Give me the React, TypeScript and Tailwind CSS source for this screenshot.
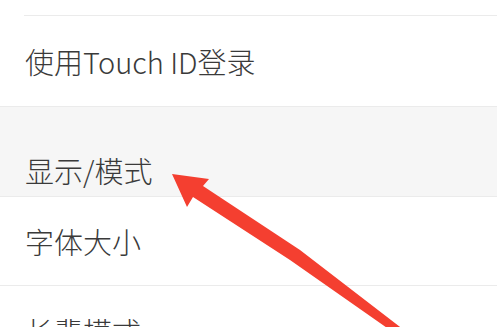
const rowText = "pl-[25px] text-[29px] leading-[30px] font-light";

function Arrow() {
  return (
    <svg
      className="pointer-events-none absolute left-0 top-0"
      width="497"
      height="327"
      viewBox="0 0 497 327"
    >
      <polygon
        fill="#f43f30"
        points="172,174 209,179 203,186 300,250 404,330 390,330 290,260 193,197 187,207"
      />
    </svg>
  );
}

export default function App() {
  return (
    <div className="relative h-[327px] w-full overflow-hidden bg-white font-['Noto_Sans_CJK_SC','Noto_Sans',sans-serif] text-[#3a3a3a]">
      <div className="h-[15px]" />
      <div className="ml-6 h-px bg-[#ebebeb]" />

      <div className={`flex h-[90px] items-center ${rowText}`}>使用Touch ID登录</div>

      <div className="flex h-[91px] items-end border-y border-[#ebebeb] bg-[#f6f6f6] pb-[11px]">
        <span className={rowText}>显示/模式</span>
      </div>

      <div className={`flex h-[88px] items-center ${rowText}`}>字体大小</div>
      <div className="h-px bg-[#ebebeb]" />
      <div className={`flex h-[90px] items-center ${rowText}`}>长辈模式</div>

      <Arrow />
    </div>
  );
}
